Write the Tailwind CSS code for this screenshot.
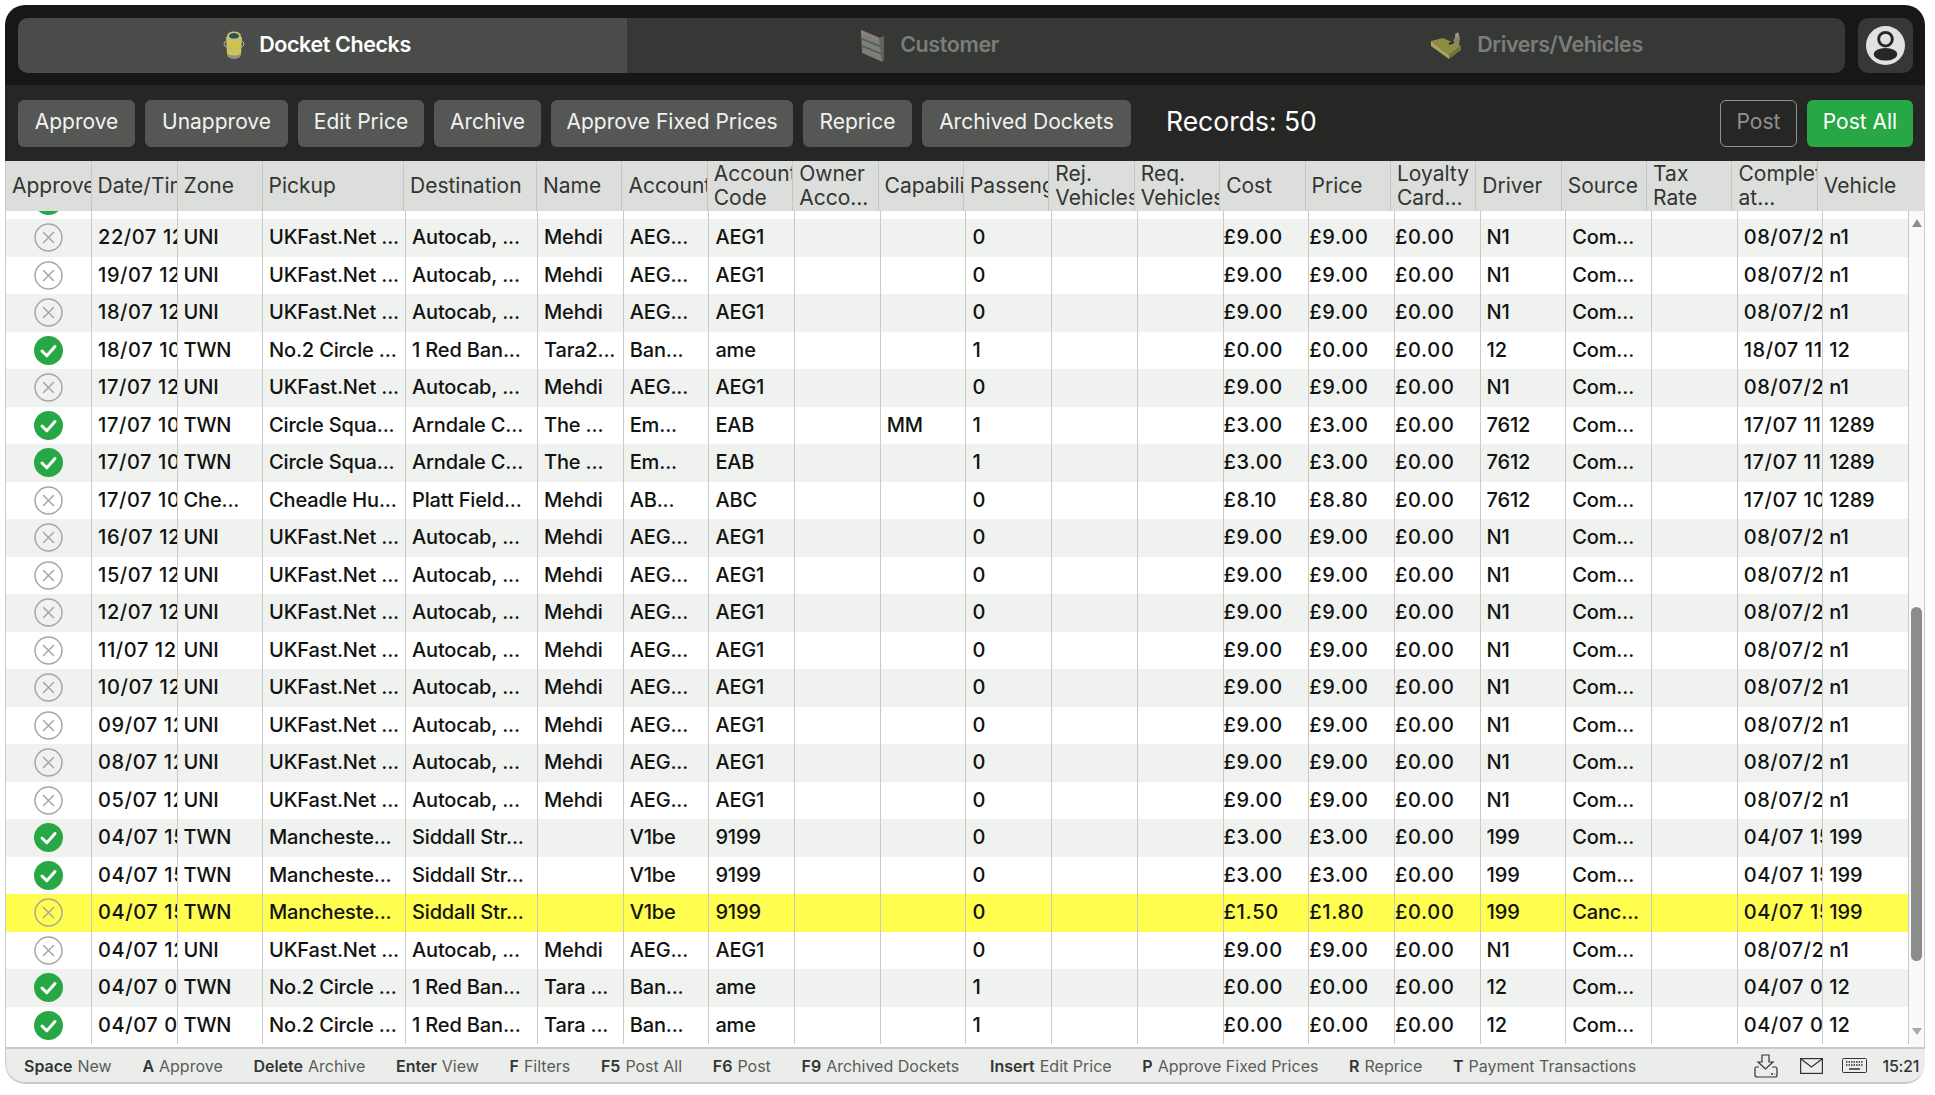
<!DOCTYPE html>
<html lang="en">
<head>
  <meta charset="UTF-8">
  <title>Docket Checks</title>
  <script src="https://cdn.jsdelivr.net/npm/@tailwindcss/browser@4"></script>
</head>
<body class="bg-white font-['Inter',sans-serif] overflow-hidden">
  <div class="ml-[5px] mt-[5px] w-[1920px] h-[1079px] rounded-[20px] overflow-hidden flex flex-col">

    <!-- top tabs -->
    <div class="h-[80px] bg-[#161815] flex items-center pl-[13px] pr-[12px] gap-[13px] shrink-0">
      <div class="flex-1 h-[55px] grid grid-cols-3 rounded-[10px] overflow-hidden bg-[#363835] text-[21.5px] font-semibold tracking-[-0.4px]">
        <div class="bg-[#4a4c49] flex items-center justify-center gap-[14px] text-white pr-[11px]">
          <svg class="w-[22px] h-[28px]" viewBox="0 0 22 28">
            <ellipse cx="11" cy="24" rx="7" ry="4" fill="#8d8f8c"/>
            <path d="M3 6 L19 6 L18 23 Q11 26 4 23 Z" fill="#cfc452"/>
            <ellipse cx="11" cy="5" rx="7" ry="4.5" fill="#c9c46a"/>
            <ellipse cx="11" cy="5" rx="5" ry="3" fill="#2f5058"/>
            <ellipse cx="11" cy="13" rx="10" ry="5" fill="none" stroke="#b8b6a4" stroke-width="1"/>
          </svg>
          <span class="pb-[2px]">Docket Checks</span>
        </div>
        <div class="flex items-center justify-center gap-[16px] text-[#7b7d7b] pr-[4px]">
          <svg class="w-[24px] h-[33px]" viewBox="0 0 24 33">
            <path d="M1 1 L22 10 L23 33 L2 24 Z" fill="#7b7f78"/>
            <path d="M1 1 L22 10 L23 13 L1 5 Z" fill="#8c7f7c"/>
            <path d="M2 10 L22 18 M2 17 L22 25" stroke="#565955" stroke-width="1.5"/>
            <path d="M19 9 L24 7 L24 31 L22 33 Z" fill="#60635e"/>
          </svg>
          <span class="pb-[2px]">Customer</span>
        </div>
        <div class="flex items-center justify-center gap-[15px] text-[#7b7d7b] pr-[8px]">
          <svg class="w-[32px] h-[27px]" viewBox="0 0 32 27">
            <path d="M1 9 L19 23 L31 14 L13 6 Z" fill="#8f8c42"/>
            <path d="M1 9 L19 23 L19 27 L1 14 Z" fill="#a8a564"/>
            <path d="M19 23 L31 14 L31 18 L19 27 Z" fill="#75733a"/>
            <path d="M21 13 L25 5 L28 0 L30 6 L29 13 Z" fill="#8a8864"/>
            <circle cx="27" cy="3" r="2" fill="#a39a7a"/>
            <path d="M19 12 L24 10" stroke="#2b2c28" stroke-width="2"/>
          </svg>
          <span class="pb-[2px]">Drivers/Vehicles</span>
        </div>
      </div>
      <div class="w-[55px] h-[55px] rounded-[10px] bg-[#363835] flex items-center justify-center">
        <svg class="w-[39px] h-[39px]" viewBox="0 0 40 40">
          <circle cx="20" cy="20" r="20" fill="#e0e2e0"/>
          <circle cx="20" cy="13.5" r="7" fill="none" stroke="#262725" stroke-width="3"/>
          <ellipse cx="20" cy="29" rx="12" ry="6.5" fill="#262725"/>
        </svg>
      </div>
    </div>

    <!-- toolbar -->
    <div class="h-[76px] bg-[#262725] flex items-center pl-[13px] pr-[12px] shrink-0 text-[21px] text-[#f2f2f2]">
      <div class="flex gap-[10px]">
        <button class="w-[117px] h-[47px] pb-[2px] rounded-[6px] bg-[#555754]">Approve</button>
        <button class="w-[143px] h-[47px] pb-[2px] rounded-[6px] bg-[#555754]">Unapprove</button>
        <button class="w-[126px] h-[47px] pb-[2px] rounded-[6px] bg-[#555754]">Edit Price</button>
        <button class="w-[107px] h-[47px] pb-[2px] rounded-[6px] bg-[#555754]">Archive</button>
        <button class="w-[242px] h-[47px] pb-[2px] rounded-[6px] bg-[#555754]">Approve Fixed Prices</button>
        <button class="w-[109px] h-[47px] pb-[2px] rounded-[6px] bg-[#555754]">Reprice</button>
        <button class="w-[209px] h-[47px] pb-[2px] rounded-[6px] bg-[#555754]">Archived Dockets</button>
      </div>
      <span class="ml-[35px] pb-[2px] text-[26.5px] text-white">Records: 50</span>
      <div class="ml-auto flex gap-[10px]">
        <button class="w-[77px] h-[47px] pb-[2px] rounded-[6px] border border-[#8f918f] text-[#8f918f]">Post</button>
        <button class="w-[106px] h-[47px] pb-[2px] rounded-[6px] bg-[#28a745] text-white">Post All</button>
      </div>
    </div>

    <!-- column headers -->
    <div id="head" class="h-[50px] shrink-0 bg-[#dcdedb] grid grid-cols-[85.5px_86px_85px_141.5px_133px_repeat(15,85.4px)_1fr] text-[21px] leading-[24px] text-[#333533] border-l border-[#c9cbc9]"></div>

    <!-- table body + scrollbar -->
    <div class="h-[836px] shrink-0 flex bg-white border-l border-[#c9cbc9]">
      <div class="flex-1 overflow-hidden">
        <div id="rows" class="mt-[-29.5px]"></div>
      </div>
      <div class="w-[16px] bg-[#f8f9f8] border-r border-[#c9cbc9] flex flex-col items-center">
        <svg class="w-[10px] h-[8px] mt-[8px]" viewBox="0 0 10 8"><path d="M5 0 L10 8 L0 8 Z" fill="#8c8e8c"/></svg>
        <div class="w-[11px] h-[354px] mt-[380px] rounded-full bg-[#8b8d8b]"></div>
        <svg class="w-[10px] h-[7px] mt-auto mb-[12px]" viewBox="0 0 10 7"><path d="M0 0 L10 0 L5 7 Z" fill="#a8aaa8"/></svg>
      </div>
    </div>

    <!-- shortcut bar -->
    <div class="flex-1 bg-[#ebedeb] border-t-2 border-b-2 border-l border-[#c9cbc9] rounded-b-[20px] flex items-center pl-[18px] pr-[6px] text-[16px] text-[#5a5c5a]">
      <div class="flex gap-[30.7px] whitespace-nowrap pt-px">
        <span><b class="font-semibold text-[#333533] mr-[5px]">Space</b>New</span>
        <span><b class="font-semibold text-[#333533] mr-[5px]">A</b>Approve</span>
        <span><b class="font-semibold text-[#333533] mr-[5px]">Delete</b>Archive</span>
        <span><b class="font-semibold text-[#333533] mr-[5px]">Enter</b>View</span>
        <span><b class="font-semibold text-[#333533] mr-[5px]">F</b>Filters</span>
        <span><b class="font-semibold text-[#333533] mr-[5px]">F5</b>Post All</span>
        <span><b class="font-semibold text-[#333533] mr-[5px]">F6</b>Post</span>
        <span><b class="font-semibold text-[#333533] mr-[5px]">F9</b>Archived Dockets</span>
        <span><b class="font-semibold text-[#333533] mr-[5px]">Insert</b>Edit Price</span>
        <span><b class="font-semibold text-[#333533] mr-[5px]">P</b>Approve Fixed Prices</span>
        <span><b class="font-semibold text-[#333533] mr-[5px]">R</b>Reprice</span>
        <span><b class="font-semibold text-[#333533] mr-[5px]">T</b>Payment Transactions</span>
      </div>
      <div class="ml-auto flex items-center text-[#333533]">
        <svg class="w-[24px] h-[24px]" viewBox="0 0 24 24" fill="none" stroke="#333" stroke-width="1.2">
          <path d="M8 1 H15 V8 H19 L11.5 15 L4 8 H8 Z"/>
          <path d="M5 13 H2 Q1 13 1 15 V21 Q1 23 3 23 H21 Q23 23 23 21 V15 Q23 13 21 13 H18"/>
          <path d="M17 20 H19 M20.5 20 H21" stroke-width="1.5"/>
        </svg>
        <svg class="w-[23px] h-[16px] ml-[22px]" viewBox="0 0 23 16" fill="none" stroke="#333" stroke-width="1.2">
          <rect x="0.6" y="0.6" width="21.8" height="14.8"/>
          <path d="M1 1 L11.5 9 L22 1"/>
        </svg>
        <svg class="w-[25px] h-[15px] ml-[19px]" viewBox="0 0 25 15" fill="none" stroke="#333" stroke-width="1">
          <rect x="0.5" y="0.5" width="24" height="14" rx="1"/>
          <path d="M4 4 H21 M4 7 H21" stroke-dasharray="1.5 1" stroke-width="1.5"/>
          <path d="M7 11 H18" stroke-width="1.5"/>
        </svg>
        <span class="ml-[16px] text-[16px] font-medium tracking-[-0.3px]">15:21</span>
      </div>
    </div>
  </div>

  <script>
    const headers = ['Approved', 'Date/Time', 'Zone', 'Pickup', 'Destination', 'Name', 'Account', 'Account Code', 'Owner Acco...', 'Capabilities', 'Passengers', 'Rej. Vehicles', 'Req. Vehicles', 'Cost', 'Price', 'Loyalty Card...', 'Driver', 'Source', 'Tax Rate', 'Completed at...', 'Vehicle'];

    document.getElementById('head').innerHTML = headers.map((h, i) =>
      `<div class="pl-[6px] flex items-center overflow-hidden ${i < 20 ? 'border-r border-[#c5c7c5]' : ''}"><span class="block">${h}</span></div>`
    ).join('');

    const uni = ['UNI', 'UKFast.Net ...', 'Autocab, ...', 'Mehdi', 'AEG...', 'AEG1', '', '', '0', '', '', '£9.00', '£9.00', '£0.00', 'N1', 'Com...', '', '08/07/24', 'n1'];
    const bank = (name) => ['TWN', 'No.2 Circle ...', '1 Red Ban...', name, 'Ban...', 'ame', '', '', '1', '', '', '£0.00', '£0.00', '£0.00', '12', 'Com...'];
    const circle = (cap) => ['TWN', 'Circle Squa...', 'Arndale C...', 'The ...', 'Em...', 'EAB', '', cap, '1', '', '', '£3.00', '£3.00', '£0.00', '7612', 'Com...', '', '17/07 11:00', '1289'];
    const manc = ['TWN', 'Mancheste...', 'Siddall Str...', '', 'V1be', '9199', '', '', '0', '', '', '£3.00', '£3.00', '£0.00', '199', 'Com...', '', '04/07 15:00', '199'];

    // [approved, date, rest of the columns]
    const rows = [
      [1, '', ['', '', '', '', '', '', '', '', '', '', '', '', '', '', '', '', '', '', '']],
      [0, '22/07 12:00', uni],
      [0, '19/07 12:00', uni],
      [0, '18/07 12:00', uni],
      [1, '18/07 10:00', [...bank('Tara2...'), '', '18/07 11:00', '12']],
      [0, '17/07 12:00', uni],
      [1, '17/07 10:00', circle('MM')],
      [1, '17/07 10:00', circle('')],
      [0, '17/07 10:00', ['Che...', 'Cheadle Hu...', 'Platt Field...', 'Mehdi', 'AB...', 'ABC', '', '', '0', '', '', '£8.10', '£8.80', '£0.00', '7612', 'Com...', '', '17/07 10:00', '1289']],
      [0, '16/07 12:00', uni],
      [0, '15/07 12:00', uni],
      [0, '12/07 12:00', uni],
      [0, '11/07 12:00', uni],
      [0, '10/07 12:00', uni],
      [0, '09/07 12:00', uni],
      [0, '08/07 12:00', uni],
      [0, '05/07 12:00', uni],
      [1, '04/07 15:00', manc],
      [1, '04/07 15:00', manc],
      [0, '04/07 15:00', ['TWN', 'Mancheste...', 'Siddall Str...', '', 'V1be', '9199', '', '', '0', '', '', '£1.50', '£1.80', '£0.00', '199', 'Canc...', '', '04/07 15:00', '199']],
      [0, '04/07 12:00', uni],
      [1, '04/07 09:00', [...bank('Tara ...'), '', '04/07 09:00', '12']],
      [1, '04/07 09:00', [...bank('Tara ...'), '', '04/07 09:00', '12']],
    ];

    const crossIcon = `<svg class="w-[29px] h-[29px]" viewBox="0 0 29 29" fill="none" stroke="#a5a7a5" stroke-width="1.5"><circle cx="14.5" cy="14.5" r="13.5"/><path d="M9.5 9.5 L19.5 19.5 M19.5 9.5 L9.5 19.5" stroke-linecap="round"/></svg>`;
    const checkIcon = `<svg class="w-[29px] h-[29px]" viewBox="0 0 29 29"><circle cx="14.5" cy="14.5" r="14.5" fill="#28a745"/><path d="M8 15 L12.8 19.8 L21 10.5" fill="none" stroke="#fff" stroke-width="3" stroke-linecap="round" stroke-linejoin="round"/></svg>`;

    document.getElementById('rows').innerHTML = rows.map((row, r) => {
      const bg = r === 19 ? 'bg-[#fffd4d]' : (r % 2 === 1 ? 'bg-[#f0f2f0]' : 'bg-white');
      const cells = [row[1], ...row[2]].map((text, c) => {
        // cost, price and loyalty sit almost against the column line
        let pad = 'pl-[6px]';
        if (c >= 12 && c <= 14) pad = 'pl-0 tracking-[0.7px]';
        else if (c === 0 || c === 18) pad = 'pl-[6px] tracking-[0.6px]';
        return `<div class="${pad} overflow-hidden whitespace-nowrap border-r border-[#c9cbc9] leading-[37px]">${text}</div>`;
      }).join('');
      return `<div class="h-[37.5px] grid grid-cols-[86px_85.5px_85.5px_143px_132px_repeat(16,85.69px)] text-[20px] font-medium tracking-[-0.15px] text-[#111311] ${bg}"><div class="flex items-center justify-center border-r border-[#c9cbc9]">${row[0] ? checkIcon : crossIcon}</div>${cells}</div>`;
    }).join('');
  </script>
</body>
</html>
